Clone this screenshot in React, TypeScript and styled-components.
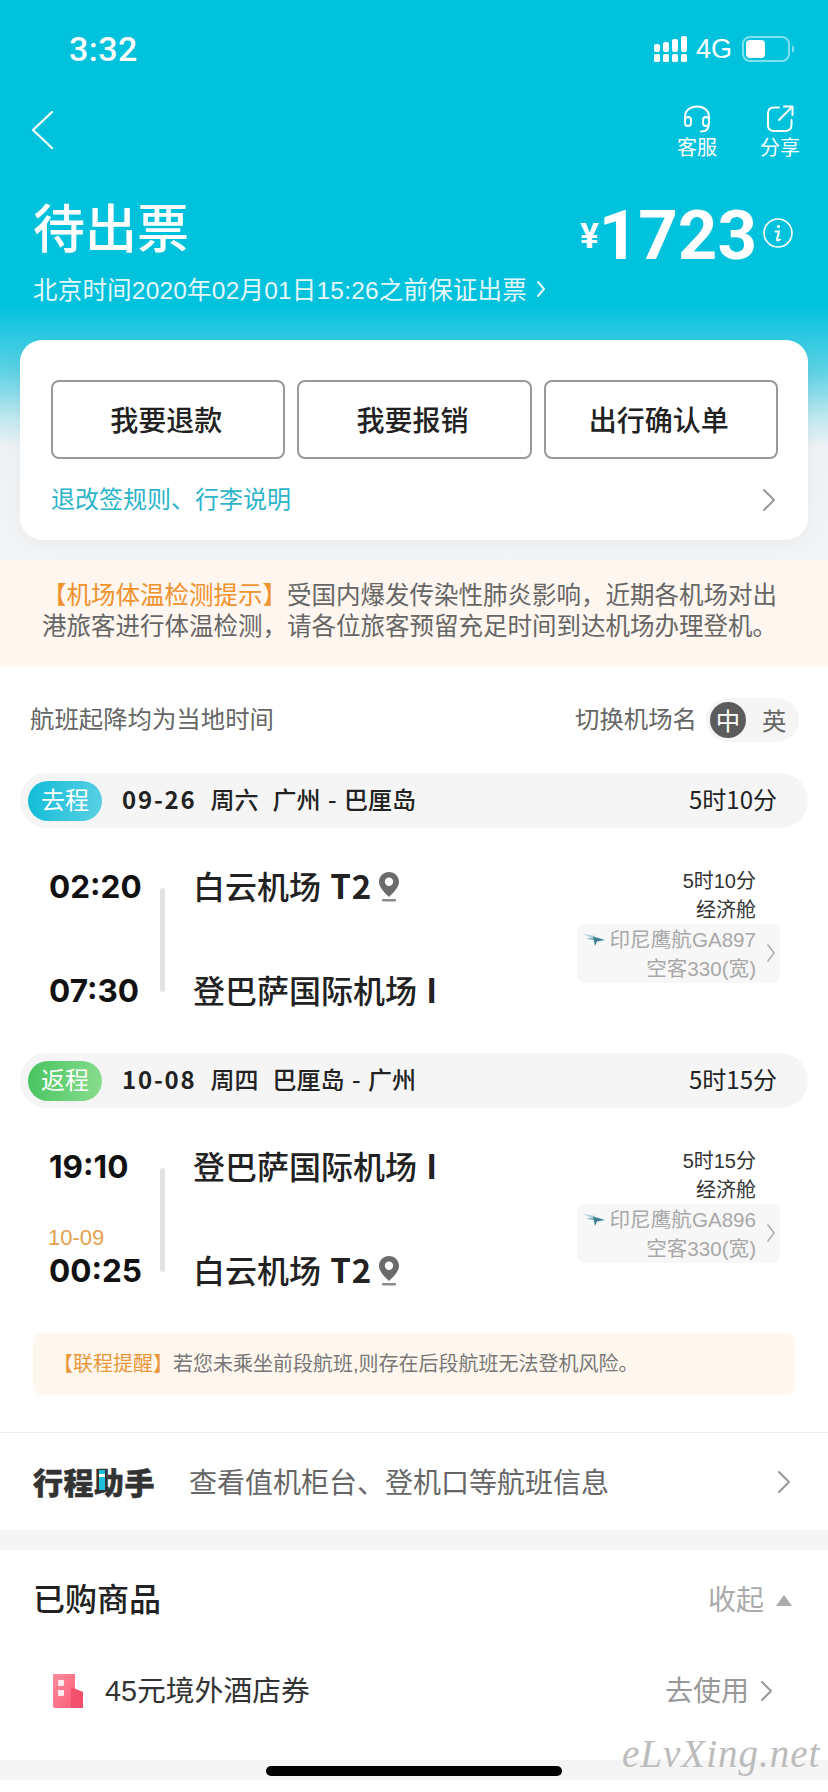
import { FC } from 'react';
import styled, { createGlobalStyle } from 'styled-components';

const GlobalStyle = createGlobalStyle`
html, body {
    margin: 0;
    padding: 0;
    background: #fff;
}
* {
    box-sizing: border-box;
}
`;

const Page = styled.div`
position: relative;
width: 828px;
height: 1792px;
overflow: hidden;
background: #fff;
color: #222;
font-family: "Liberation Sans", "Noto Sans CJK SC", sans-serif;
`;

const Hero = styled.div`
height: 560px;
background: linear-gradient(180deg, #00c2dd 0, #00c2dd 305px, #5fd2e5 372px, #c4e9f0 420px, #eef2f4 448px, #f3f4f6 560px);
color: #fff;
`;

const StatusBar = styled.div`
height: 98px;
display: flex;
align-items: center;
justify-content: space-between;
padding: 0 34px 0 69px;
`;

const Clock = styled.div`
font-size: 34px;
font-weight: 500;
letter-spacing: 0.5px;
font-family: Roboto, sans-serif;
`;

const StatusIcons = styled.div`
display: flex;
align-items: center;
`;

const NetworkLabel = styled.div`
font-size: 27px;
margin: 0 10px 0 9px;
`;

const NavBar = styled.div`
height: 102px;
display: flex;
justify-content: space-between;
padding: 7px 18px 0 31px;
`;

const BackButton = styled.div`
padding-top: 6px;
`;

const NavActions = styled.div`
display: flex;
gap: 23px;
`;

const NavAction = styled.div`
width: 60px;
display: flex;
flex-direction: column;
align-items: center;
gap: 2px;
font-size: 20px;
line-height: 26px;
`;

const TitleRow = styled.div`
height: 60px;
display: flex;
justify-content: space-between;
align-items: center;
padding: 0 35px 0 33px;
`;

const Title = styled.div`
font-size: 52px;
font-weight: 500;
line-height: 60px;
`;

const Amount = styled.div`
display: flex;
align-items: center;
`;

const Currency = styled.span`
font-size: 35px;
font-weight: 700;
margin-top: 12px;
font-family: Roboto, sans-serif;
`;

const Price = styled.span`
font-size: 69px;
font-weight: 700;
font-family: Roboto, sans-serif;
margin: 10px 6px 0 0;
`;

const InfoSlot = styled.div`
display: flex;
margin-top: 6px;
`;

const Deadline = styled.div`
margin-top: 15px;
height: 28px;
padding-left: 33px;
display: flex;
align-items: center;
gap: 10px;
font-size: 24.5px;
letter-spacing: 0.2px;
color: #e4f8fb;
`;

const DeadlineText = styled.span`
padding-bottom: 2px;
`;

const ActionCard = styled.div`
margin: 37px 20px 0;
height: 200px;
padding: 40px 30px 0 31px;
background: #fff;
border-radius: 22px;
box-shadow: 0 4px 20px rgba(0, 0, 0, 0.04);
`;

const ButtonRow = styled.div`
display: grid;
grid-template-columns: repeat(3, 1fr);
gap: 12px;
`;

const ActionButton = styled.div`
height: 79px;
display: flex;
align-items: center;
justify-content: center;
padding: 0 4px 2px 0;
border: 2px solid #999;
border-radius: 8px;
font-size: 28px;
font-weight: 500;
color: #222;
`;

const RulesRow = styled.div`
height: 81px;
display: flex;
align-items: center;
justify-content: space-between;
padding: 0 3px 0 0;
font-size: 24px;
color: #2cb4c9;
`;

const RulesText = styled.span`
padding-bottom: 4px;
`;

const Notice = styled.div`
height: 106px;
padding: 20px 42px 0;
background: #fff6ef;
font-size: 24.5px;
line-height: 31px;
color: #666;
white-space: nowrap;
`;

const Highlight = styled.span<{ $color: string }>`
color: ${props => props.$color};
`;

const TimeNote = styled.div`
height: 107px;
display: flex;
align-items: center;
justify-content: space-between;
padding: 0 29px 0 30px;
font-size: 24.4px;
color: #666;
`;

const NoteText = styled.span`
padding-bottom: 4px;
`;

const AirportSwitch = styled.div`
display: flex;
align-items: center;
gap: 9px;
`;

const Toggle = styled.div`
width: 93px;
height: 44px;
display: flex;
align-items: center;
gap: 16px;
padding-left: 4px;
border-radius: 22px;
background: #f5f5f5;
`;

const ToggleKnob = styled.div`
width: 36px;
height: 36px;
display: flex;
align-items: center;
justify-content: center;
border-radius: 50%;
background: #5c5c5c;
color: #fff;
`;

const LegHeader = styled.div`
height: 55px;
margin: 0 20px;
display: flex;
align-items: center;
padding: 0 31px 0 8px;
border-radius: 28px;
background: #f5f5f5;
font-family: "Noto Sans CJK SC", sans-serif;
font-size: 24px;
`;

const LegTag = styled.div<{ $from: string; $to: string }>`
width: 74px;
height: 40px;
display: flex;
align-items: center;
justify-content: center;
margin-right: 20px;
padding-bottom: 4px;
border-radius: 20px;
background: linear-gradient(100deg, ${props => props.$from}, ${props => props.$to});
color: #fff;
`;

const LegRoute = styled.div`
flex: 1;
display: flex;
align-items: baseline;
gap: 14px;
padding-bottom: 4px;
font-weight: 500;
word-spacing: 2px;
`;

const DateText = styled.span`
letter-spacing: 1.8px;
font-weight: 700;
`;

const LegDuration = styled.span`
padding-bottom: 4px;
`;

const Flight = styled.div`
height: 225px;
display: flex;
padding: 39px 48px 0 49px;
`;

const TimeColumn = styled.div`
width: 110px;
display: flex;
flex-direction: column;
gap: 64px;
`;

const TimeCell = styled.div`
position: relative;
height: 40px;
line-height: 40px;
font-family: Inter, sans-serif;
font-size: 31.5px;
font-weight: 700;
color: #111;
`;

const NextDay = styled.div`
position: absolute;
left: -1px;
top: -25px;
line-height: 24px;
font-family: "Liberation Sans", sans-serif;
font-size: 22px;
font-weight: 400;
color: #e3a04d;
`;

const Rail = styled.div`
width: 5px;
height: 104px;
margin: 21px 28px 0 1px;
border-radius: 3px;
background: #e2e2e2;
`;

const AirportColumn = styled.div`
flex: 1;
display: flex;
flex-direction: column;
gap: 64px;
`;

const Airport = styled.div`
height: 40px;
display: flex;
align-items: center;
gap: 7px;
font-family: "Noto Sans CJK SC", sans-serif;
font-size: 32px;
font-weight: 500;
color: #222;
`;

const AirportName = styled.span`
padding-bottom: 4px;
`;

const TerminalCode = styled.span`
font-size: 33px;
font-weight: 700;
letter-spacing: 1px;
margin-left: 2px;
`;

const FlightInfo = styled.div`
display: flex;
flex-direction: column;
align-items: flex-end;
font-size: 20px;
line-height: 29px;
color: #333;
`;

const InfoLine = styled.div`
padding-right: 24px;
`;

const CarrierBox = styled.div`
position: relative;
margin-top: -1px;
padding: 1px 24px 0 6px;
border-radius: 8px;
background: #f7f7f7;
font-size: 20.6px;
color: #a8a8a8;
text-align: right;
`;

const CarrierLine = styled.div`
display: flex;
align-items: center;
justify-content: flex-end;
gap: 5px;
`;

const CarrierChevron = styled.div`
position: absolute;
right: 5px;
top: 20px;
display: flex;
`;

const Warning = styled.div`
height: 62px;
margin: 0 33px;
display: flex;
align-items: center;
padding: 0 0 4px 20px;
border-radius: 8px;
background: #fff7ee;
font-size: 20px;
color: #777;
`;

const AssistantRow = styled.div`
height: 98px;
margin-top: 37px;
display: flex;
align-items: center;
padding: 0 38px 0 33px;
border-top: 1px solid #eee;
`;

const AssistantLogo = styled.div`
position: relative;
width: 156px;
padding-bottom: 2px;
font-size: 30px;
font-weight: 900;
letter-spacing: 0.5px;
color: #333;
-webkit-text-stroke: 0.5px #333;
`;

const LogoDot = styled.span`
position: absolute;
left: 66px;
top: 11px;
width: 6px;
height: 20px;
background: linear-gradient(180deg, #1cc0d8 0, #1cc0d8 22%, #fff 22%, #fff 36%, #1cc0d8 36%);
`;

const AssistantText = styled.div`
flex: 1;
padding-bottom: 2px;
font-size: 28px;
color: #666;
`;

const Band = styled.div`
height: 20px;
background: #f5f5f5;
`;

const PurchasedSection = styled.div`
height: 210px;
`;

const PurchasedHead = styled.div`
height: 100px;
display: flex;
align-items: center;
justify-content: space-between;
padding: 0 36px 0 33px;
`;

const PurchasedTitle = styled.div`
padding-bottom: 6px;
font-size: 32px;
font-weight: 500;
color: #222;
`;

const Collapse = styled.div`
display: flex;
align-items: center;
gap: 12px;
font-size: 28px;
color: #aaa;
`;

const CollapseText = styled.span`
padding-bottom: 4px;
`;

const Triangle = styled.div`
width: 0;
height: 0;
border-left: 8px solid transparent;
border-right: 8px solid transparent;
border-bottom: 11px solid #aaa;
`;

const VoucherRow = styled.div`
height: 82px;
display: flex;
align-items: center;
padding: 0 56px 0 52px;
font-size: 28px;
`;

const VoucherName = styled.div`
flex: 1;
margin-left: 21px;
padding-bottom: 6px;
font-size: 28.8px;
color: #333;
`;

const VoucherAction = styled.div`
display: flex;
align-items: center;
gap: 12px;
color: #999;
`;

const VoucherLabel = styled.span`
padding-bottom: 4px;
`;

const HomeBar = styled.div`
position: absolute;
left: 266px;
bottom: 16px;
width: 296px;
height: 10px;
border-radius: 5px;
background: #000;
`;

const Watermark = styled.div`
position: absolute;
left: 622px;
top: 1731px;
font-family: "Liberation Serif", serif;
font-style: italic;
font-size: 39px;
letter-spacing: 1px;
color: #bcbcbc;
`;

const Chevron: FC<{ w: number; h: number; color: string; sw?: number }> = ({ w, h, color, sw = 2 }) => (
    <svg width={w} height={h} viewBox={`0 0 ${w} ${h}`} fill='none'>
        <path d={`M1 1L${w - 1} ${h / 2}L1 ${h - 1}`} stroke={color} strokeWidth={sw} strokeLinecap='round' strokeLinejoin='round' />
    </svg>
);

const SignalIcon = () => (
    <svg width='33' height='26' viewBox='0 0 33 26' fill='#fff'>
        <rect x='0' y='18' width='6' height='8' rx='1.5' />
        <rect x='9' y='18' width='6' height='8' rx='1.5' />
        <rect x='18' y='18' width='6' height='8' rx='1.5' />
        <rect x='27' y='18' width='6' height='8' rx='1.5' />
        <rect x='0' y='8' width='6' height='8' rx='2' />
        <rect x='9' y='6' width='6' height='10' rx='2' />
        <rect x='18' y='3' width='6' height='13' rx='2' />
        <rect x='27' y='0' width='6' height='16' rx='2' />
    </svg>
);

const BatteryIcon = () => (
    <svg width='52' height='26' viewBox='0 0 52 26'>
        <rect x='1' y='1' width='46' height='24' rx='7' fill='none' stroke='#7fe0ee' strokeWidth='2' />
        <rect x='4' y='4' width='19' height='18' rx='4' fill='#fff' />
        <path d='M50 9L52 11V15L50 17Z' fill='#7fe0ee' />
    </svg>
);

const BackIcon = () => (
    <svg width='22' height='38' viewBox='0 0 22 38' fill='none'>
        <path d='M21 1L2 19L21 37' stroke='#fff' strokeWidth='2.2' strokeLinecap='round' strokeLinejoin='round' />
    </svg>
);

const HeadsetIcon = () => (
    <svg width='28' height='28' viewBox='0 0 28 28' fill='none' stroke='#fff' strokeWidth='2'>
        <path d='M2 15V12C2 5.5 7 1.5 14 1.5C21 1.5 26 5.5 26 12V15' />
        <rect x='2' y='12' width='6' height='9' rx='3' />
        <rect x='20' y='12' width='6' height='9' rx='3' />
        <path d='M25.5 20C25.5 24 23 26.5 18 26.5' strokeLinecap='round' />
    </svg>
);

const ShareIcon = () => (
    <svg width='28' height='28' viewBox='0 0 28 28' fill='none' stroke='#fff' strokeWidth='2' strokeLinecap='round' strokeLinejoin='round'>
        <path d='M13 2.5H8C4 2.5 2 4.5 2 8.5V20C2 24 4 26 8 26H19C23 26 25.5 24 25.5 20V15' />
        <path d='M13 15L26 2M18 1.5H26.5V10' />
    </svg>
);

const InfoIcon = () => (
    <svg width='30' height='30' viewBox='0 0 30 30' fill='none' stroke='#fff' strokeWidth='1.6'>
        <circle cx='15' cy='15' r='14' />
        <circle cx='15.5' cy='8.5' r='1.6' fill='#fff' stroke='none' />
        <path d='M12.5 13.5H16L14 21.5C13.8 22.6 15 22.8 17 21.5' strokeWidth='2' strokeLinecap='round' />
    </svg>
);

const PinIcon = () => (
    <svg width='20' height='30' viewBox='0 0 20 30'>
        <path d='M10 0C4.5 0 0 4.3 0 9.8C0 16 6.5 21.5 10 25C13.5 21.5 20 16 20 9.8C20 4.3 15.5 0 10 0ZM10 14A4.2 4.2 0 1 1 10 5.6A4.2 4.2 0 0 1 10 14Z' fill='#6b6b6b' />
        <rect x='3' y='27' width='14' height='2.4' rx='1' fill='#8a8a8a' />
    </svg>
);

const PlaneLogo = () => (
    <svg width='22' height='14' viewBox='0 0 22 14'>
        <path d='M0 1L12 3L10 5.5Z' fill='#a9cdd4' />
        <path d='M3 5L12 5L13 8.5Z' fill='#8fb7c0' />
        <path d='M10 3.5L22 7L14 8.5L12 13L11 8Z' fill='#3c7f92' />
    </svg>
);

const HotelIcon = () => (
    <svg width='32' height='34' viewBox='0 0 32 34'>
        <defs>
            <linearGradient id='hotel' x1='0' y1='0' x2='1' y2='1'>
                <stop offset='0' stopColor='#ff8c9c' />
                <stop offset='1' stopColor='#fa5f78' />
            </linearGradient>
        </defs>
        <path d='M1 0H23V34H3C2 34 1 33 1 32Z' fill='url(#hotel)' />
        <path d='M19 13L31 18V34H19Z' fill='#f24f6c' />
        <rect x='6' y='6' width='6' height='6' rx='1' fill='#fff' opacity='0.85' />
        <rect x='6' y='16' width='6' height='6' rx='1' fill='#fff' opacity='0.85' />
    </svg>
);

interface AirportInfo {
    name: string;
    terminal: string;
    pin: boolean;
}

interface LegProps {
    tag: string;
    from: string;
    to: string;
    date: string;
    week: string;
    route: string;
    duration: string;
    times: string[];
    airports: AirportInfo[];
    nextDay?: string;
    flightNo: string;
}

const Leg: FC<LegProps> = ({ tag, from, to, date, week, route, duration, times, airports, nextDay, flightNo }) => (
    <>
        <LegHeader>
            <LegTag $from={from} $to={to}>{tag}</LegTag>
            <LegRoute>
                <DateText>{date}</DateText>
                <span>{week}</span>
                <span>{route}</span>
            </LegRoute>
            <LegDuration>{duration}</LegDuration>
        </LegHeader>
        <Flight>
            <TimeColumn>
                <TimeCell>{times[0]}</TimeCell>
                <TimeCell>
                    {nextDay && <NextDay>{nextDay}</NextDay>}
                    {times[1]}
                </TimeCell>
            </TimeColumn>
            <Rail />
            <AirportColumn>
                {airports.map(airport => (
                    <Airport key={airport.name}>
                        <AirportName>
                            {airport.name} <TerminalCode>{airport.terminal}</TerminalCode>
                        </AirportName>
                        {airport.pin && <PinIcon />}
                    </Airport>
                ))}
            </AirportColumn>
            <FlightInfo>
                <InfoLine>{duration}</InfoLine>
                <InfoLine>经济舱</InfoLine>
                <CarrierBox>
                    <CarrierLine>
                        <PlaneLogo />
                        印尼鹰航{flightNo}
                    </CarrierLine>
                    <div>空客330(宽)</div>
                    <CarrierChevron>
                        <Chevron w={8} h={18} color='#b0b0b0' sw={1.6} />
                    </CarrierChevron>
                </CarrierBox>
            </FlightInfo>
        </Flight>
    </>
);

const baiyun: AirportInfo = { name: '白云机场', terminal: 'T2', pin: true };
const denpasar: AirportInfo = { name: '登巴萨国际机场', terminal: 'I', pin: false };

export default function App() {
    return (
        <Page>
            <GlobalStyle />
            <Hero>
                <StatusBar>
                    <Clock>3:32</Clock>
                    <StatusIcons>
                        <SignalIcon />
                        <NetworkLabel>4G</NetworkLabel>
                        <BatteryIcon />
                    </StatusIcons>
                </StatusBar>
                <NavBar>
                    <BackButton><BackIcon /></BackButton>
                    <NavActions>
                        <NavAction><HeadsetIcon />客服</NavAction>
                        <NavAction><ShareIcon />分享</NavAction>
                    </NavActions>
                </NavBar>
                <TitleRow>
                    <Title>待出票</Title>
                    <Amount>
                        <Currency>¥</Currency>
                        <Price>1723</Price>
                        <InfoSlot><InfoIcon /></InfoSlot>
                    </Amount>
                </TitleRow>
                <Deadline>
                    <DeadlineText>北京时间2020年02月01日15:26之前保证出票</DeadlineText>
                    <Chevron w={8} h={16} color='#e4f8fb' />
                </Deadline>
                <ActionCard>
                    <ButtonRow>
                        <ActionButton>我要退款</ActionButton>
                        <ActionButton>我要报销</ActionButton>
                        <ActionButton>出行确认单</ActionButton>
                    </ButtonRow>
                    <RulesRow>
                        <RulesText>退改签规则、行李说明</RulesText>
                        <Chevron w={12} h={22} color='#999' />
                    </RulesRow>
                </ActionCard>
            </Hero>
            <Notice>
                <Highlight $color='#f0922e'>【机场体温检测提示】</Highlight>受国内爆发传染性肺炎影响，近期各机场对出
                <br />
                港旅客进行体温检测，请各位旅客预留充足时间到达机场办理登机。
            </Notice>
            <TimeNote>
                <NoteText>航班起降均为当地时间</NoteText>
                <AirportSwitch>
                    <NoteText>切换机场名</NoteText>
                    <Toggle>
                        <ToggleKnob>中</ToggleKnob>
                        英
                    </Toggle>
                </AirportSwitch>
            </TimeNote>
            <Leg
                tag='去程'
                from='#0fbcd6'
                to='#5cd0e4'
                date='09-26'
                week='周六'
                route='广州 - 巴厘岛'
                duration='5时10分'
                times={['02:20', '07:30']}
                airports={[baiyun, denpasar]}
                flightNo='GA897'
            />
            <Leg
                tag='返程'
                from='#46c35f'
                to='#8ade8e'
                date='10-08'
                week='周四'
                route='巴厘岛 - 广州'
                duration='5时15分'
                times={['19:10', '00:25']}
                airports={[denpasar, baiyun]}
                nextDay='10-09'
                flightNo='GA896'
            />
            <Warning>
                <Highlight $color='#e8973a'>【联程提醒】</Highlight>若您未乘坐前段航班,则存在后段航班无法登机风险。
            </Warning>
            <AssistantRow>
                <AssistantLogo>
                    行程助手
                    <LogoDot />
                </AssistantLogo>
                <AssistantText>查看值机柜台、登机口等航班信息</AssistantText>
                <Chevron w={12} h={22} color='#999' />
            </AssistantRow>
            <Band />
            <PurchasedSection>
                <PurchasedHead>
                    <PurchasedTitle>已购商品</PurchasedTitle>
                    <Collapse>
                        <CollapseText>收起</CollapseText>
                        <Triangle />
                    </Collapse>
                </PurchasedHead>
                <VoucherRow>
                    <HotelIcon />
                    <VoucherName>45元境外酒店券</VoucherName>
                    <VoucherAction>
                        <VoucherLabel>去使用</VoucherLabel>
                        <Chevron w={11} h={20} color='#999' />
                    </VoucherAction>
                </VoucherRow>
            </PurchasedSection>
            <Band />
            <HomeBar />
            <Watermark>eLvXing.net</Watermark>
        </Page>
    );
}
